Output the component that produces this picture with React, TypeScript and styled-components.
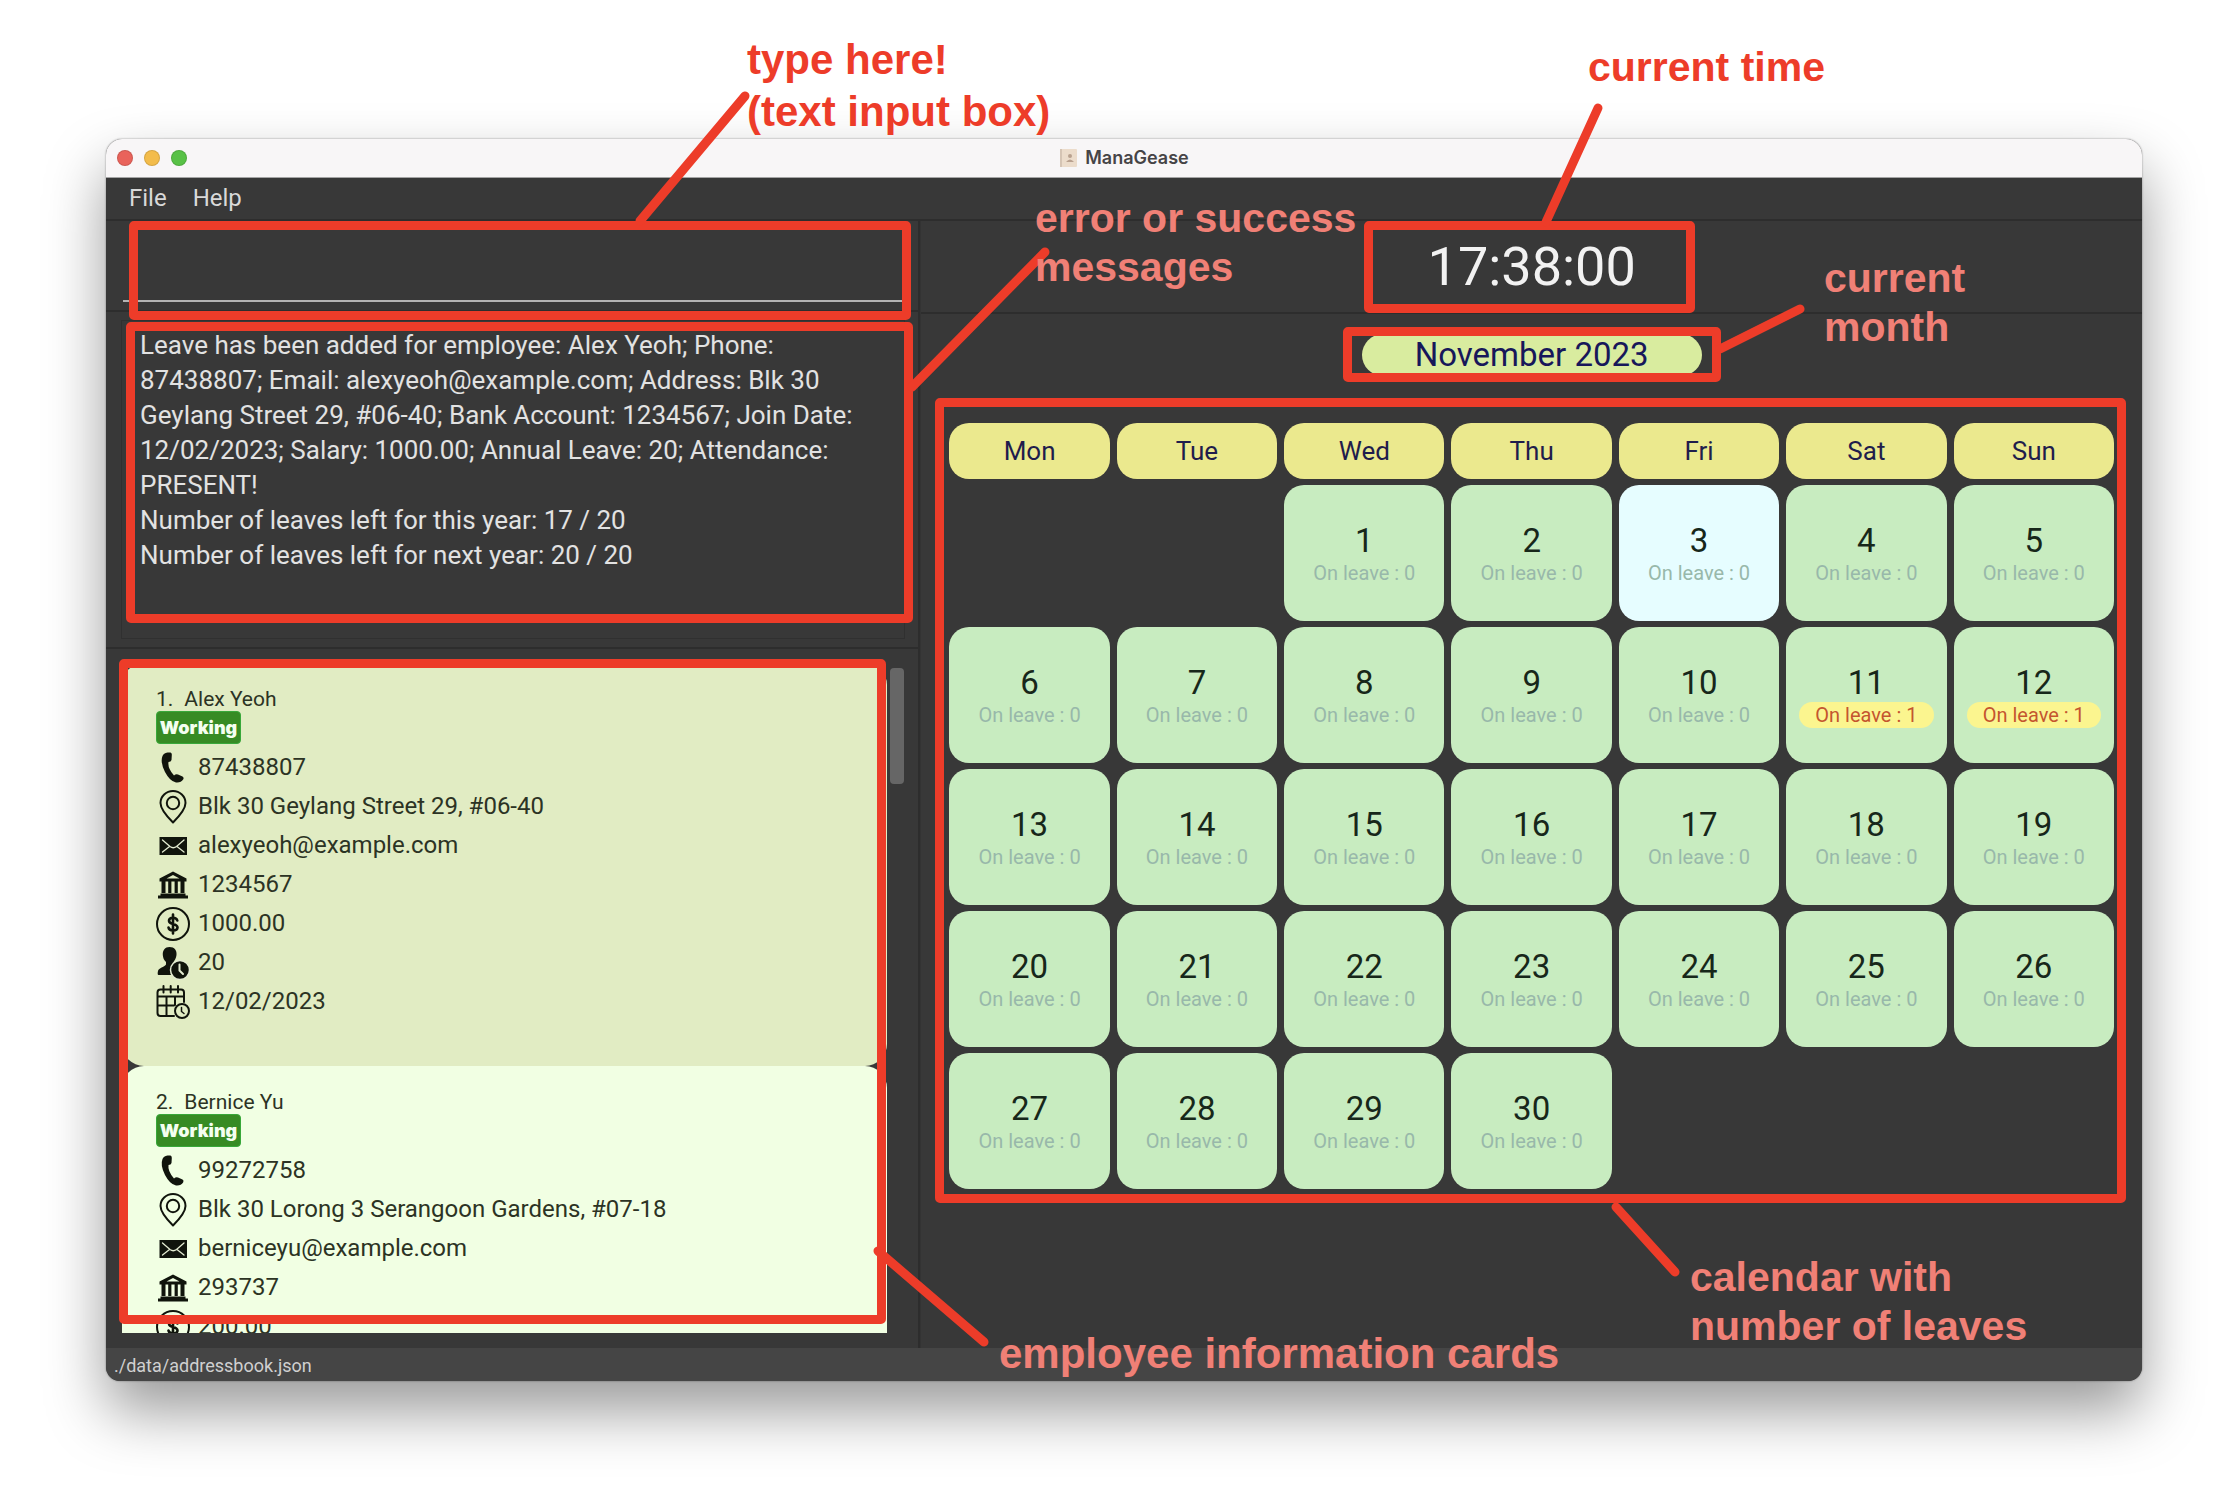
import React from "react";
import styled, { createGlobalStyle, css } from "styled-components";

const GlobalStyle = createGlobalStyle`
  *, *::before, *::after { box-sizing: border-box; }
  body {
    margin: 0;
    background: #ffffff;
    font-family: Roboto, "Liberation Sans", sans-serif;
  }
`;

const RED = "#ed3c29";
const SALMON = "#f08076";
const PANEL = "#383838";
const LINE = "#2d2d2d";

/* ---------- window frame ---------- */

const Stage = styled.main`
  position: relative;
  min-height: 100vh;
  padding: 139px 78px 127px 106px;
  overflow: hidden;
`;

const Window = styled.section`
  display: flex;
  flex-direction: column;
  height: calc(100vh - 266px);
  min-height: 1100px;
  border-radius: 16px 16px 14px 14px;
  background: ${PANEL};
  overflow: hidden;
`;

const WindowShadow = styled.div`
  border-radius: 16px 16px 14px 14px;
  box-shadow: 0 0 2px rgba(0, 0, 0, 0.45), 0 30px 60px rgba(0, 0, 0, 0.4);
`;

const TitleBar = styled.header`
  display: grid;
  grid-template-columns: 1fr auto 1fr;
  align-items: center;
  height: 39px;
  padding: 0 11px;
  background: #f8f6f7;
  border-bottom: 1px solid #a5a5a5;
`;

const Lights = styled.div`
  display: flex;
  gap: 11px;
`;

const Light = styled.button<{ $color: string }>`
  width: 16px;
  height: 16px;
  padding: 0;
  border: 1px solid rgba(0, 0, 0, 0.12);
  border-radius: 50%;
  background: ${(p) => p.$color};
`;

const Title = styled.h1`
  display: flex;
  align-items: center;
  gap: 7px;
  margin: 0;
  padding-bottom: 1px;
  font: 600 18px/24px Inter, sans-serif;
  color: #464446;
`;

const MenuBar = styled.nav`
  display: flex;
  gap: 10px;
  height: 43px;
  padding: 0 15px;
  border-bottom: 2px solid ${LINE};
`;

const MenuButton = styled.button`
  padding: 0 8px;
  border: 0;
  background: none;
  font: 400 24px/41px Roboto, sans-serif;
  color: #d9d9d9;
`;

const Body = styled.div`
  display: grid;
  grid-template-columns: 2fr 3fr;
  flex: 1;
  min-height: 0;
`;

const StatusBar = styled.footer`
  height: 33px;
  padding: 0 8px;
  background: #454545;
  font-size: 18px;
  line-height: 35px;
  color: #d0d0d0;
`;

/* ---------- left column ---------- */

const LeftPane = styled.div`
  display: flex;
  flex-direction: column;
  min-height: 0;
  border-right: 2px solid ${LINE};
`;

const CommandArea = styled.form`
  height: 91px;
  padding: 9px 15px 8px 17px;
  border-bottom: 2px solid ${LINE};
`;

const CommandInput = styled.input`
  display: block;
  width: 100%;
  height: 72px;
  border: 0;
  border-bottom: 2px solid #b4b4b4;
  outline: 0;
  background: transparent;
  font: 400 26px/35px Roboto, sans-serif;
  color: #e4e4e4;
`;

const ResultArea = styled.div`
  height: 337px;
  padding: 8px 13px 8px 15px;
  border-bottom: 2px solid ${LINE};
`;

const Result = styled.output`
  display: block;
  height: 319px;
  padding: 7px 36px 0 18px;
  border: 1px solid #303030;
  font-size: 26px;
  line-height: 35px;
  white-space: pre-line;
  color: #e2e2e2;
`;

const ListArea = styled.div`
  display: flex;
  flex: 1;
  min-height: 0;
  gap: 3px;
  padding: 14px 14px 15px 16px;
`;

const CardList = styled.ol`
  flex: 1;
  margin: 0;
  padding: 0;
  overflow: hidden;
  list-style: none;
`;

const ScrollThumb = styled.div`
  width: 14px;
  height: 116px;
  margin-top: 5px;
  border-radius: 4px;
  background: #666666;
`;

const Card = styled.li<{ $alt?: boolean }>`
  height: 403px;
  padding: 24px 34px;
  border-radius: 22px;
  background: ${(p) => (p.$alt ? "#f1ffe3" : "#e1ecc3")};
  color: #2c3324;
`;

const Name = styled.h2`
  display: flex;
  gap: 11px;
  margin: 0;
  font-size: 21px;
  font-weight: 400;
  line-height: 24px;
`;

const Badge = styled.span`
  display: block;
  width: 85px;
  height: 33px;
  border: 1px solid #38a83a;
  border-radius: 4px;
  background: #378b24;
  font: 900 18px/31px Inter, sans-serif;
  text-align: center;
  color: #f4fff0;
`;

const Details = styled.ul`
  margin: 4px 0 0;
  padding: 0;
  list-style: none;
`;

const Detail = styled.li`
  display: flex;
  align-items: center;
  gap: 8px;
  height: 39px;
  font-size: 24px;
  line-height: 32px;

  span { padding-bottom: 2px; }
`;

const Icon = styled.svg`
  width: 34px;
  height: 34px;
  flex: none;
  fill: none;
  stroke: #10140c;
  stroke-width: 2;
  stroke-linecap: round;
  stroke-linejoin: round;
`;

/* ---------- right column ---------- */

const RightPane = styled.div`
  min-width: 0;
  border-left: 1px solid #333333;
`;

const Clock = styled.time`
  display: flex;
  align-items: center;
  justify-content: center;
  height: 93px;
  border-bottom: 2px solid ${LINE};
  font-size: 54px;
  line-height: 60px;
  color: #f2f2f2;
`;

const CalendarArea = styled.section`
  padding: 20px 21px 0 21px;
`;

const Month = styled.h2`
  width: 340px;
  height: 42px;
  margin: 0 auto 41px;
  border-radius: 21px;
  background: #d9ec9f;
  font-size: 33px;
  font-weight: 400;
  line-height: 42px;
  text-align: center;
  color: #17175a;
`;

const Calendar = styled.table`
  width: 100%;
  table-layout: fixed;
  border-collapse: separate;
  border-spacing: 7px 6px;
`;

const Weekday = styled.th`
  height: 56px;
  padding: 0;
  border-radius: 20px;
  background: #ebe98e;
  font-size: 26px;
  font-weight: 400;
  line-height: 32px;
  color: #1f1d4c;
`;

const Day = styled.td<{ $blank?: boolean; $today?: boolean }>`
  height: 136px;
  padding: 13px 13px 11px;
  border-radius: 20px;
  background: ${(p) => (p.$blank ? "none" : p.$today ? "#e6fdff" : "#c8ecc0")};
  text-align: center;
  vertical-align: middle;
`;

const DayNumber = styled.div`
  font-size: 33px;
  line-height: 38px;
  color: #17271a;
`;

const OnLeave = styled.div<{ $active: boolean }>`
  border-radius: 13px;
  font-size: 20px;
  line-height: 26px;
  color: #98b8aa;
  ${(p) =>
    p.$active &&
    css`
      background: #fbf58f;
      color: #c4552f;
    `}
`;

/* ---------- callouts drawn over the window ---------- */

const Callouts = styled.div`
  position: absolute;
  inset: 0;
  pointer-events: none;
`;

const Frame = styled.div<{ $x: number; $y: number; $w: number; $h: number }>`
  position: absolute;
  left: ${(p) => p.$x}px;
  top: ${(p) => p.$y}px;
  width: ${(p) => p.$w}px;
  height: ${(p) => p.$h}px;
  border: 9px solid ${RED};
  border-radius: 5px;
`;

const Pointers = styled.svg`
  position: absolute;
  left: 0;
  top: 0;
  width: 2220px;
  height: 1508px;
  stroke: ${RED};
  stroke-width: 9;
  stroke-linecap: round;
`;

const Note = styled.p<{ $x: number; $y: number; $onDark?: boolean; $large?: boolean }>`
  position: absolute;
  left: ${(p) => p.$x}px;
  top: ${(p) => p.$y}px;
  margin: 0;
  font: 700 ${(p) => (p.$large ? "42px/52px" : "41px/49px")} "Liberation Sans", Arial, sans-serif;
  white-space: pre;
  color: ${(p) => (p.$onDark ? SALMON : RED)};
`;

/* ---------- icons ---------- */

const PhoneIcon = () => (
  <Icon viewBox="0 0 34 34">
    <path
      d="M6.500 5Q7.500 2 11.500 1.500L14.500 1.500Q16 2 15.800 4L15.500 9Q15 11 12.500 11Q11.500 17 18 24.500Q20 22.500 22 23.500L26.500 25.500Q28.300 26.700 27.100 28.500Q25 32 20 31.500Q14 30.500 9 21Q4 11 6.500 5Z"
      fill="#10140c"
      stroke="none"
    />
  </Icon>
);

const PinIcon = () => (
  <Icon viewBox="0 0 34 34">
    <path d="M17 32.500Q4.500 20 4.500 13A12.500 12 0 0 1 29.500 13Q29.500 20 17 32.500Z" />
    <circle cx="17" cy="13" r="6.200" />
  </Icon>
);

const MailIcon = () => (
  <Icon viewBox="0 0 34 34">
    <rect x="3.500" y="8" width="27.500" height="18" fill="#10140c" stroke="none" />
    <path d="M6.500 11L14 17.500Q17.200 20 20.500 17.500L28 11M6.500 23L13.500 17.500M28 23L21 17.500" stroke="#e4ecd2" strokeWidth="1.300" />
  </Icon>
);

const BankIcon = () => (
  <Icon viewBox="0 0 34 34">
    <path
      d="M17 3.500L30.500 10.500V13.500H3.500V10.500ZM10.500 10.500H23.500L17 7ZM5.500 13.500H9.500V26H5.500ZM12.200 13.500H15.400V26H12.200ZM18.600 13.500H21.800V26H18.600ZM24.500 13.500H28.500V26H24.500ZM4.500 25.500H29.500V27.500H32V30.500H2V27.500H4.500Z"
      fill="#10140c"
      fillRule="evenodd"
      stroke="none"
    />
  </Icon>
);

const DollarIcon = () => (
  <Icon viewBox="0 0 34 34">
    <circle cx="17" cy="17" r="16" />
    <path d="M21.300 13.500Q20.500 10.800 17 10.800Q13 11 13 13.800Q13 16 17 17Q21.500 18.200 21.500 20.600Q21.300 23.400 17 23.400Q13 23.400 12.500 20.500M17 7.500V26.500" strokeWidth="2.600" />
  </Icon>
);

const UserClockIcon = () => (
  <Icon viewBox="0 0 34 34">
    <path
      d="M13.500 1C18.500 1 21 4.500 20.500 9C20.200 12.500 18.500 14.500 17.500 16V18L21 19.500L17 29H2.500C1.500 29 1.500 27 2 25C3 21.500 8 21.500 10 18.500V16C8 14 7 12 6.800 9C6.500 4.500 9 1 13.500 1Z"
      fill="#10140c"
      stroke="none"
    />
    <circle cx="24" cy="24" r="9.500" fill="#10140c" stroke="#e4ecd2" strokeWidth="1.500" />
    <path d="M23.500 18.500V24.500L27 28" stroke="#e4ecd2" />
  </Icon>
);

const CalendarClockIcon = () => (
  <Icon viewBox="0 0 34 34">
    <path d="M18 31H4.500Q1.500 31 1.500 28V7.500Q1.500 4.500 4.500 4.500H25Q28 4.500 28 7.500V17M1.500 11.500H28M1.500 20.500H18M10.500 11.500V31M19 11.500V20M7.500 1V7.500M14.700 1V7.500M22 1V7.500" />
    <circle cx="26" cy="26" r="7" />
    <path d="M25.500 22.500V26.500L28 28.500" strokeWidth="1.500" />
  </Icon>
);

const AppIcon = () => (
  <svg width="19" height="20" viewBox="0 0 19 20" aria-hidden="true">
    <rect x="1" y="1" width="17" height="18" rx="1" fill="#ecdccb" />
    <rect x="1" y="1" width="2" height="18" fill="#d5c4b4" />
    <circle cx="11" cy="8" r="2" fill="#b9a18f" />
    <path d="M7 14Q11 9 15 14Z" fill="#b9a18f" />
  </svg>
);

/* ---------- data ---------- */

const ICONS = [PhoneIcon, PinIcon, MailIcon, BankIcon, DollarIcon, UserClockIcon, CalendarClockIcon];

const EMPLOYEES = [
  {
    name: "Alex Yeoh",
    status: "Working",
    details: ["87438807", "Blk 30 Geylang Street 29, #06-40", "alexyeoh@example.com", "1234567", "1000.00", "20", "12/02/2023"],
  },
  {
    name: "Bernice Yu",
    status: "Working",
    details: ["99272758", "Blk 30 Lorong 3 Serangoon Gardens, #07-18", "berniceyu@example.com", "293737", "200.00"],
  },
];

const RESULT = `Leave has been added for employee: Alex Yeoh; Phone: 87438807; Email: alexyeoh@example.com; Address: Blk 30 Geylang Street 29, #06-40; Bank Account: 1234567; Join Date: 12/02/2023; Salary: 1000.00; Annual Leave: 20; Attendance: PRESENT!
Number of leaves left for this year: 17 / 20
Number of leaves left for next year: 20 / 20`;

const WEEKDAYS = ["Mon", "Tue", "Wed", "Thu", "Fri", "Sat", "Sun"];
const FIRST_COLUMN = 2;
const DAYS_IN_MONTH = 30;
const TODAY = 3;
const LEAVES: Record<number, number> = { 11: 1, 12: 1 };

const WEEKS = Array.from({ length: 5 }, (_, week) =>
  WEEKDAYS.map((_, column) => {
    const day = week * 7 + column - FIRST_COLUMN + 1;
    return day >= 1 && day <= DAYS_IN_MONTH ? day : null;
  })
);

const FRAMES = [
  { x: 129, y: 221, w: 782, h: 99 },
  { x: 126, y: 322, w: 787, h: 301 },
  { x: 119, y: 659, w: 767, h: 665 },
  { x: 1364, y: 221, w: 331, h: 92 },
  { x: 1343, y: 327, w: 378, h: 55 },
  { x: 935, y: 398, w: 1191, h: 805 },
];

const POINTERS = [
  [745, 96, 640, 221],
  [1045, 252, 912, 387],
  [1598, 108, 1546, 222],
  [1800, 309, 1720, 349],
  [1616, 1207, 1675, 1272],
  [878, 1251, 984, 1342],
];

export default function App() {
  return (
    <Stage>
      <GlobalStyle />
      <WindowShadow>
        <Window>
          <TitleBar>
            <Lights>
              <Light $color="#e9635b" aria-label="Close" />
              <Light $color="#f3bc4b" aria-label="Minimize" />
              <Light $color="#58c146" aria-label="Zoom" />
            </Lights>
            <Title>
              <AppIcon />
              ManaGease
            </Title>
          </TitleBar>
          <MenuBar>
            <MenuButton>File</MenuButton>
            <MenuButton>Help</MenuButton>
          </MenuBar>
          <Body>
            <LeftPane>
              <CommandArea onSubmit={(e) => e.preventDefault()}>
                <CommandInput type="text" aria-label="Command" />
              </CommandArea>
              <ResultArea>
                <Result>{RESULT}</Result>
              </ResultArea>
              <ListArea>
                <CardList>
                  {EMPLOYEES.map((employee, index) => (
                    <Card key={employee.name} $alt={index % 2 === 1}>
                      <Name>
                        <span>{index + 1}.</span>
                        <span>{employee.name}</span>
                      </Name>
                      <Badge>{employee.status}</Badge>
                      <Details>
                        {employee.details.map((text, row) => {
                          const RowIcon = ICONS[row];
                          return (
                            <Detail key={row}>
                              <RowIcon />
                              <span>{text}</span>
                            </Detail>
                          );
                        })}
                      </Details>
                    </Card>
                  ))}
                </CardList>
                <ScrollThumb />
              </ListArea>
            </LeftPane>
            <RightPane>
              <Clock>17:38:00</Clock>
              <CalendarArea>
                <Month>November 2023</Month>
                <Calendar>
                  <thead>
                    <tr>
                      {WEEKDAYS.map((name) => (
                        <Weekday key={name} scope="col">{name}</Weekday>
                      ))}
                    </tr>
                  </thead>
                  <tbody>
                    {WEEKS.map((week, row) => (
                      <tr key={row}>
                        {week.map((day, column) =>
                          day === null ? (
                            <Day key={column} $blank />
                          ) : (
                            <Day key={column} $today={day === TODAY}>
                              <DayNumber>{day}</DayNumber>
                              <OnLeave $active={(LEAVES[day] ?? 0) > 0}>On leave : {LEAVES[day] ?? 0}</OnLeave>
                            </Day>
                          )
                        )}
                      </tr>
                    ))}
                  </tbody>
                </Calendar>
              </CalendarArea>
            </RightPane>
          </Body>
          <StatusBar>./data/addressbook.json</StatusBar>
        </Window>
      </WindowShadow>

      <Callouts>
        {FRAMES.map((f, i) => (
          <Frame key={i} $x={f.x} $y={f.y} $w={f.w} $h={f.h} />
        ))}
        <Pointers viewBox="0 0 2220 1508">
          {POINTERS.map(([x1, y1, x2, y2], i) => (
            <line key={i} x1={x1} y1={y1} x2={x2} y2={y2} />
          ))}
        </Pointers>
        <Note $x={747} $y={34} $large>{"type here!\n(text input box)"}</Note>
        <Note $x={1588} $y={43}>current time</Note>
        <Note $x={1035} $y={194} $onDark>{"error or success\nmessages"}</Note>
        <Note $x={1824} $y={254} $onDark>{"current\nmonth"}</Note>
        <Note $x={1690} $y={1253} $onDark>{"calendar with\nnumber of leaves"}</Note>
        <Note $x={999} $y={1328} $onDark $large>employee information cards</Note>
      </Callouts>
    </Stage>
  );
}
